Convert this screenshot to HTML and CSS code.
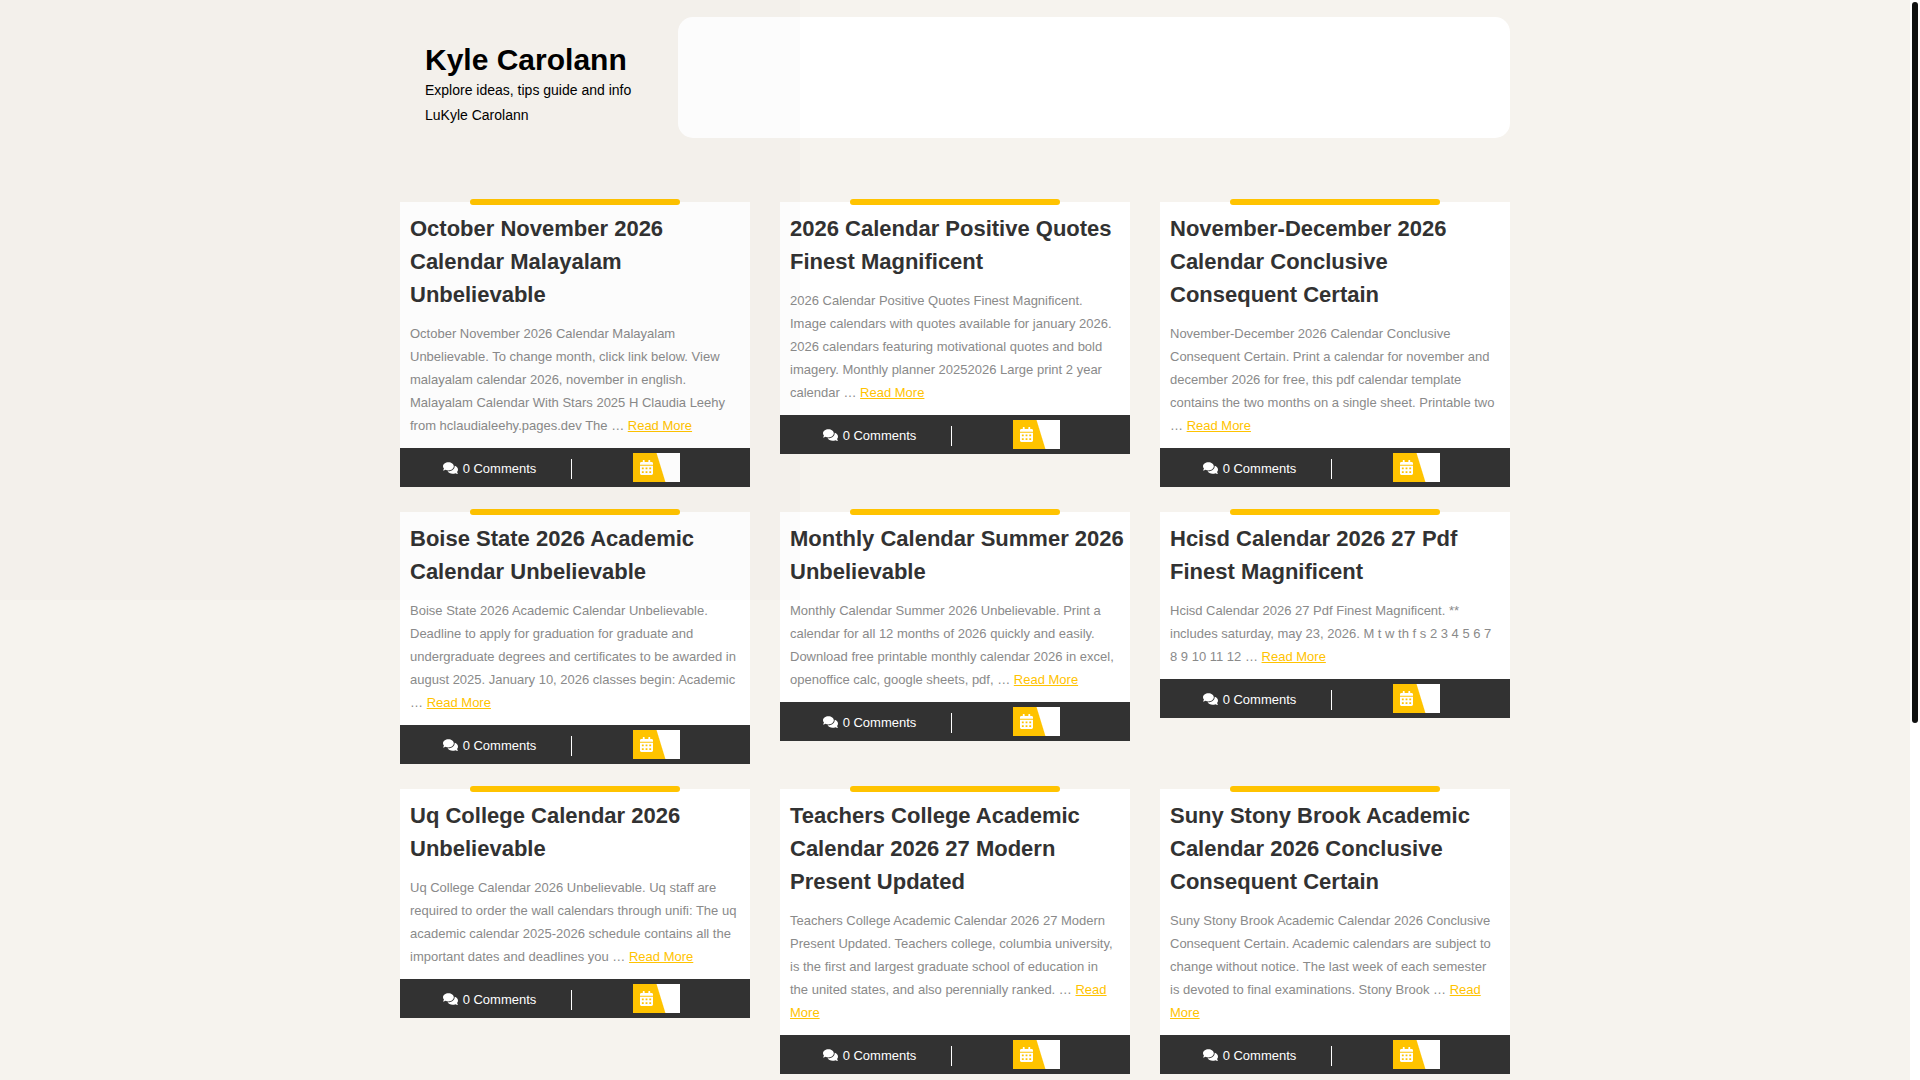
FILE: index.html
```html
<!DOCTYPE html>
<html lang="en">
<head>
<meta charset="utf-8">
<meta name="viewport" content="width=device-width, initial-scale=1">
<title>Kyle Carolann</title>
<link rel="stylesheet" href="styles.css">
</head>
<body>
<svg class="sprite" aria-hidden="true">
  <symbol id="comments" viewBox="0 32 576 448"><path d="M416 192c0-88.4-93.1-160-208-160S0 103.6 0 192c0 34.3 14.1 65.9 38 92-13.4 30.2-35.5 54.2-35.8 54.5-2.2 2.3-2.8 5.7-1.5 8.7S4.8 352 8 352c36.6 0 66.9-12.3 88.7-25 32.2 15.7 70.3 25 111.3 25 114.9 0 208-71.6 208-160zm122 220c23.9-26 38-57.7 38-92 0-66.9-53.5-124.2-129.3-148.1.9 6.6 1.3 13.3 1.3 20.1 0 105.9-107.7 192-240 192-10.8 0-21.3-.8-31.7-1.9C207.8 439.6 281.8 480 368 480c41 0 79.1-9.2 111.3-25 21.8 12.7 52.1 25 88.7 25 3.2 0 6.1-1.9 7.3-4.8 1.3-2.9.7-6.3-1.5-8.7-.3-.2-22.4-24.2-35.8-54.5z"/></symbol>
  <symbol id="calendar" viewBox="0 0 448 512"><path d="M0 464c0 26.5 21.5 48 48 48h352c26.5 0 48-21.5 48-48V192H0v272zm320-196c0-6.6 5.4-12 12-12h40c6.6 0 12 5.4 12 12v40c0 6.6-5.4 12-12 12h-40c-6.6 0-12-5.4-12-12v-40zm0 128c0-6.6 5.4-12 12-12h40c6.6 0 12 5.4 12 12v40c0 6.6-5.4 12-12 12h-40c-6.6 0-12-5.4-12-12v-40zM192 268c0-6.6 5.4-12 12-12h40c6.6 0 12 5.4 12 12v40c0 6.6-5.4 12-12 12h-40c-6.6 0-12-5.4-12-12v-40zm0 128c0-6.6 5.4-12 12-12h40c6.6 0 12 5.4 12 12v40c0 6.6-5.4 12-12 12h-40c-6.6 0-12-5.4-12-12v-40zM64 268c0-6.6 5.4-12 12-12h40c6.6 0 12 5.4 12 12v40c0 6.6-5.4 12-12 12H76c-6.6 0-12-5.4-12-12v-40zm0 128c0-6.6 5.4-12 12-12h40c6.6 0 12 5.4 12 12v40c0 6.6-5.4 12-12 12H76c-6.6 0-12-5.4-12-12v-40zM400 64h-48V16c0-8.8-7.2-16-16-16h-32c-8.8 0-16 7.2-16 16v48H160V16c0-8.8-7.2-16-16-16h-32c-8.8 0-16 7.2-16 16v48H48C21.5 64 0 85.5 0 112v48h448v-48c0-26.5-21.5-48-48-48z"/></symbol>
</svg>

<div class="container">
  <header class="site-header">
    <div class="brand">
      <h1 class="brand-title"><a href="#">Kyle Carolann</a></h1>
      <p class="tagline">Explore ideas, tips guide and info LuKyle Carolann</p>
    </div>
    <div class="header-panel"></div>
  </header>

  <main class="posts">
    <article class="post">
      <h2 class="post-title"><a href="#">October November 2026 Calendar Malayalam Unbelievable</a></h2>
      <p class="post-text">October November 2026 Calendar Malayalam Unbelievable. To change month, click link below. View malayalam calendar 2026, november in english. Malayalam Calendar With Stars 2025 H Claudia Leehy from hclaudialeehy.pages.dev The … <a href="#">Read More</a></p>
      <footer class="post-meta">
        <span class="comments"><svg class="icon-comments" aria-hidden="true"><use href="#comments"/></svg>0 Comments</span>
        <span class="date"><svg class="icon-calendar" aria-hidden="true"><use href="#calendar"/></svg></span>
      </footer>
    </article>

    <article class="post">
      <h2 class="post-title"><a href="#">2026 Calendar Positive Quotes Finest Magnificent</a></h2>
      <p class="post-text">2026 Calendar Positive Quotes Finest Magnificent. Image calendars with quotes available for january 2026. 2026 calendars featuring motivational quotes and bold imagery. Monthly planner 20252026 Large print 2 year calendar … <a href="#">Read More</a></p>
      <footer class="post-meta">
        <span class="comments"><svg class="icon-comments" aria-hidden="true"><use href="#comments"/></svg>0 Comments</span>
        <span class="date"><svg class="icon-calendar" aria-hidden="true"><use href="#calendar"/></svg></span>
      </footer>
    </article>

    <article class="post">
      <h2 class="post-title"><a href="#">November-December 2026 Calendar Conclusive Consequent Certain</a></h2>
      <p class="post-text">November-December 2026 Calendar Conclusive Consequent Certain. Print a calendar for november and december 2026 for free, this pdf calendar template contains the two months on a single sheet. Printable two … <a href="#">Read More</a></p>
      <footer class="post-meta">
        <span class="comments"><svg class="icon-comments" aria-hidden="true"><use href="#comments"/></svg>0 Comments</span>
        <span class="date"><svg class="icon-calendar" aria-hidden="true"><use href="#calendar"/></svg></span>
      </footer>
    </article>

    <article class="post">
      <h2 class="post-title"><a href="#">Boise State 2026 Academic Calendar Unbelievable</a></h2>
      <p class="post-text">Boise State 2026 Academic Calendar Unbelievable. Deadline to apply for graduation for graduate and undergraduate degrees and certificates to be awarded in august 2025. January 10, 2026 classes begin: Academic … <a href="#">Read More</a></p>
      <footer class="post-meta">
        <span class="comments"><svg class="icon-comments" aria-hidden="true"><use href="#comments"/></svg>0 Comments</span>
        <span class="date"><svg class="icon-calendar" aria-hidden="true"><use href="#calendar"/></svg></span>
      </footer>
    </article>

    <article class="post">
      <h2 class="post-title"><a href="#">Monthly Calendar Summer 2026 Unbelievable</a></h2>
      <p class="post-text">Monthly Calendar Summer 2026 Unbelievable. Print a calendar for all 12 months of 2026 quickly and easily. Download free printable monthly calendar 2026 in excel, openoffice calc, google sheets, pdf, … <a href="#">Read More</a></p>
      <footer class="post-meta">
        <span class="comments"><svg class="icon-comments" aria-hidden="true"><use href="#comments"/></svg>0 Comments</span>
        <span class="date"><svg class="icon-calendar" aria-hidden="true"><use href="#calendar"/></svg></span>
      </footer>
    </article>

    <article class="post">
      <h2 class="post-title"><a href="#">Hcisd Calendar 2026 27 Pdf Finest Magnificent</a></h2>
      <p class="post-text">Hcisd Calendar 2026 27 Pdf Finest Magnificent. ** includes saturday, may 23, 2026. M t w th f s 2 3 4 5 6 7 8 9 10 11 12 … <a href="#">Read More</a></p>
      <footer class="post-meta">
        <span class="comments"><svg class="icon-comments" aria-hidden="true"><use href="#comments"/></svg>0 Comments</span>
        <span class="date"><svg class="icon-calendar" aria-hidden="true"><use href="#calendar"/></svg></span>
      </footer>
    </article>

    <article class="post">
      <h2 class="post-title"><a href="#">Uq College Calendar 2026 Unbelievable</a></h2>
      <p class="post-text">Uq College Calendar 2026 Unbelievable. Uq staff are required to order the wall calendars through unifi: The uq academic calendar 2025-2026 schedule contains all the important dates and deadlines you … <a href="#">Read More</a></p>
      <footer class="post-meta">
        <span class="comments"><svg class="icon-comments" aria-hidden="true"><use href="#comments"/></svg>0 Comments</span>
        <span class="date"><svg class="icon-calendar" aria-hidden="true"><use href="#calendar"/></svg></span>
      </footer>
    </article>

    <article class="post">
      <h2 class="post-title"><a href="#">Teachers College Academic Calendar 2026 27 Modern Present Updated</a></h2>
      <p class="post-text">Teachers College Academic Calendar 2026 27 Modern Present Updated. Teachers college, columbia university, is the first and largest graduate school of education in the united states, and also perennially ranked. … <a href="#">Read More</a></p>
      <footer class="post-meta">
        <span class="comments"><svg class="icon-comments" aria-hidden="true"><use href="#comments"/></svg>0 Comments</span>
        <span class="date"><svg class="icon-calendar" aria-hidden="true"><use href="#calendar"/></svg></span>
      </footer>
    </article>

    <article class="post">
      <h2 class="post-title"><a href="#">Suny Stony Brook Academic Calendar 2026 Conclusive Consequent Certain</a></h2>
      <p class="post-text">Suny Stony Brook Academic Calendar 2026 Conclusive Consequent Certain. Academic calendars are subject to change without notice. The last week of each semester is devoted to final examinations. Stony Brook … <a href="#">Read More</a></p>
      <footer class="post-meta">
        <span class="comments"><svg class="icon-comments" aria-hidden="true"><use href="#comments"/></svg>0 Comments</span>
        <span class="date"><svg class="icon-calendar" aria-hidden="true"><use href="#calendar"/></svg></span>
      </footer>
    </article>
  </main>
</div>

<div class="shade" aria-hidden="true"></div>
<div class="scroll-track" aria-hidden="true"><div class="scroll-thumb"></div></div>
</body>
</html>
```
FILE: styles.css
```css
* {
  box-sizing: border-box;
}

body {
  margin: 0;
  padding-right: 10px;
  background: #f6f3ee;
  color: #8a8a8a;
  font-family: "Liberation Sans", Arial, sans-serif;
  font-size: 13px;
  line-height: 23px;
}

h1,
h2,
p {
  margin: 0;
}

.sprite {
  display: none;
}

.container {
  max-width: 1110px;
  margin: 0 auto;
}

/* Header */
.site-header {
  display: grid;
  grid-template-columns: 1fr 3fr;
  padding: 17px 0 64px;
}

.brand {
  padding: 25px 25px 10px;
  color: #000;
}

.brand-title {
  font-size: 30px;
  line-height: 36px;
}

.brand-title a,
.post-title a {
  color: inherit;
  text-decoration: none;
}

.tagline {
  font-size: 14px;
  line-height: 25px;
}

.header-panel {
  background: #fff;
  border-radius: 15px;
}

/* Posts */
.posts {
  display: grid;
  grid-template-columns: repeat(3, minmax(0, 1fr));
  align-items: start;
  gap: 25px 30px;
}

.post {
  position: relative;
  background: #fff;
}

.post::before {
  content: "";
  position: absolute;
  top: -3px;
  left: 20%;
  width: 60%;
  height: 6px;
  border-radius: 3px;
  background: #ffc300;
}

.post-title {
  padding: 10px 0 0 10px;
  color: #323232;
  font-size: 22px;
  line-height: 33px;
}

.post-text {
  padding: 11px 12px 11px 10px;
}

.post-text a {
  color: #ffc300;
}

.post-meta {
  display: grid;
  grid-template-columns: 1fr 1fr;
  padding: 5px 8px 5px 0;
  background: #323232;
  color: #fff;
}

.comments {
  display: flex;
  align-items: center;
  align-self: end;
  justify-content: center;
  gap: 5px;
  margin: 0 -1px 3px 0;
  padding-left: 8px;
  border-right: 1px solid #fff;
  line-height: 20px;
}

.icon-comments {
  width: 15px;
  height: 12px;
  margin-bottom: 2px;
  fill: currentColor;
}

.date {
  display: flex;
  align-items: center;
  justify-self: center;
  width: 47px;
  height: 29px;
  padding-left: 7px;
  background: linear-gradient(73deg, #ffc300 57%, #fff 59%);
}

.icon-calendar {
  width: 13px;
  height: 15px;
  fill: #fff;
}

/* Faint tint over the top left corner of the window */
.shade {
  position: fixed;
  top: 0;
  left: 0;
  width: 800px;
  height: 600px;
  background: rgba(0, 0, 0, 0.012);
  pointer-events: none;
}

/* Scroll indicator */
.scroll-track {
  position: fixed;
  top: 0;
  right: 0;
  bottom: 0;
  width: 10px;
  padding: 2px;
  background: #fff;
}

.scroll-thumb {
  height: 67%;
  border-radius: 3px;
  background: #0f1111;
}
```
